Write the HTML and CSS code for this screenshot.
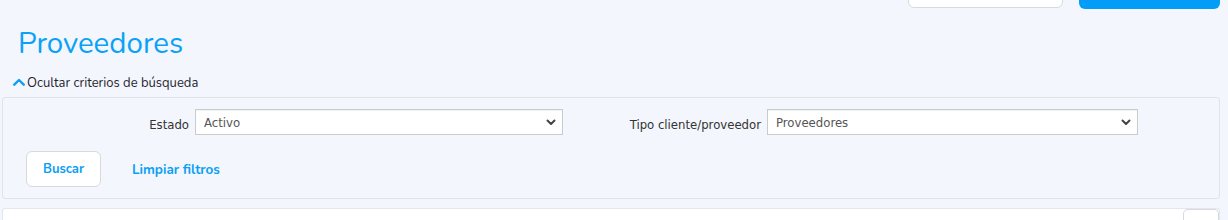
FILE: index.html
```html
<!DOCTYPE html>
<html lang="es">
<head>
<meta charset="utf-8">
<link rel="stylesheet" href="styles.css">
</head>
<body>
<div class="topbar">
  <button class="btn-outline" type="button" aria-label="Exportar"></button>
  <button class="btn-primary" type="button" aria-label="Nuevo proveedor"></button>
</div>
<h1 class="title">Proveedores</h1>
<div class="toggle">
  <svg class="toggle-icon" width="12" height="8" viewBox="0 0 12 8"><path d="M1.3 6.7 L6 2 L10.7 6.7" fill="none" stroke="#0aa0f5" stroke-width="2.4" stroke-linecap="round" stroke-linejoin="round"/></svg>
  <span>Ocultar criterios de búsqueda</span>
</div>
<section class="panel">
  <div class="fields">
    <label class="label">Estado</label>
    <div class="select-wrap">
      <select class="select"><option>Activo</option></select>
      <svg class="caret" width="10" height="7" viewBox="0 0 10 7"><path d="M1.5 1.5 L5 5 L8.5 1.5" fill="none" stroke="#444" stroke-width="2" stroke-linecap="round" stroke-linejoin="round"/></svg>
    </div>
    <label class="label">Tipo cliente/proveedor</label>
    <div class="select-wrap">
      <select class="select"><option>Proveedores</option></select>
      <svg class="caret" width="10" height="7" viewBox="0 0 10 7"><path d="M1.5 1.5 L5 5 L8.5 1.5" fill="none" stroke="#444" stroke-width="2" stroke-linecap="round" stroke-linejoin="round"/></svg>
    </div>
  </div>
  <div class="actions">
    <button class="btn-search" type="button">Buscar</button>
    <a class="link" href="#">Limpiar filtros</a>
  </div>
</section>
<section class="card">
  <div class="card-tool"></div>
</section>
</body>
</html>
```
FILE: styles.css
```css
html, body {
  margin: 0;
  padding: 0;
}
body {
  background: #f4f6fd;
  font-family: "Nunito", "Lato", "Open Sans", sans-serif;
  color: #333;
  overflow: hidden;
  height: 220px;
}
.topbar {
  display: flex;
  justify-content: flex-end;
  gap: 16px;
  padding-right: 8px;
  margin-top: -28px;
  height: 37px;
}
.btn-outline {
  width: 155px;
  height: 36px;
  background: #fff;
  border: 1px solid #d6d9de;
  border-radius: 6px;
}
.btn-primary {
  width: 141px;
  height: 37px;
  background: #039df8;
  border: none;
  border-radius: 6px;
}
.title {
  margin: 19px 0 0;
  padding-left: 18px;
  font-weight: 400;
  font-size: 29.5px;
  line-height: 30px;
  color: #0aa2f6;
  height: 30px;
}
.toggle {
  display: flex;
  align-items: center;
  gap: 2px;
  margin-top: 17px;
  padding-left: 13px;
  font-size: 13px;
  line-height: 16px;
  color: #25252d;
}
.toggle-icon {
  display: block;
  margin-top: -2px;
}
.panel {
  margin: 6px 8px 0 2px;
  height: 100px;
  border: 1px solid #e0e3e9;
  border-radius: 3px;
  background: #f4f6fd;
}
.fields {
  display: grid;
  grid-template-columns: 186px 368px 192px 371px;
  column-gap: 6px;
  align-items: center;
  margin-top: 11px;
}
.label {
  text-align: right;
  font-family: "DejaVu Sans Condensed", "Liberation Sans", sans-serif;
  font-size: 13px;
  color: #333;
  padding-top: 4px;
}
.select-wrap {
  position: relative;
  height: 26px;
}
.select {
  appearance: none;
  -webkit-appearance: none;
  width: 100%;
  height: 26px;
  margin: 0;
  padding: 0 8px;
  border: 1px solid #c9cccf;
  border-radius: 0;
  background: #fff;
  box-shadow: inset 0 1px 1px rgba(0,0,0,0.06);
  font-family: "DejaVu Sans Condensed", "Liberation Sans", sans-serif;
  font-size: 13px;
  color: #555;
}
.caret {
  position: absolute;
  right: 7px;
  top: 10px;
}
.actions {
  display: flex;
  align-items: center;
  gap: 31px;
  margin-top: 16px;
  padding-left: 23px;
}
.btn-search {
  width: 75px;
  height: 36px;
  background: #fff;
  border: 1px solid #d6d9de;
  border-radius: 6px;
  color: #0aa0f5;
  font-family: "Nunito", "Lato", sans-serif;
  font-weight: 700;
  font-size: 13px;
  padding: 0;
}
.link {
  color: #0aa0f5;
  font-weight: 700;
  font-size: 13.5px;
  text-decoration: none;
}
.card {
  position: relative;
  margin: 9px 8px 0 2px;
  height: 11px;
  background: #fff;
  border: 1px solid #e3e6ec;
  border-bottom: none;
  border-radius: 3px 3px 0 0;
}
.card-tool {
  position: absolute;
  right: 0;
  top: 0;
  width: 34px;
  height: 11px;
  border: 1px solid #d6d9de;
  border-bottom: none;
  border-radius: 5px 5px 0 0;
  background: #fff;
}
```
